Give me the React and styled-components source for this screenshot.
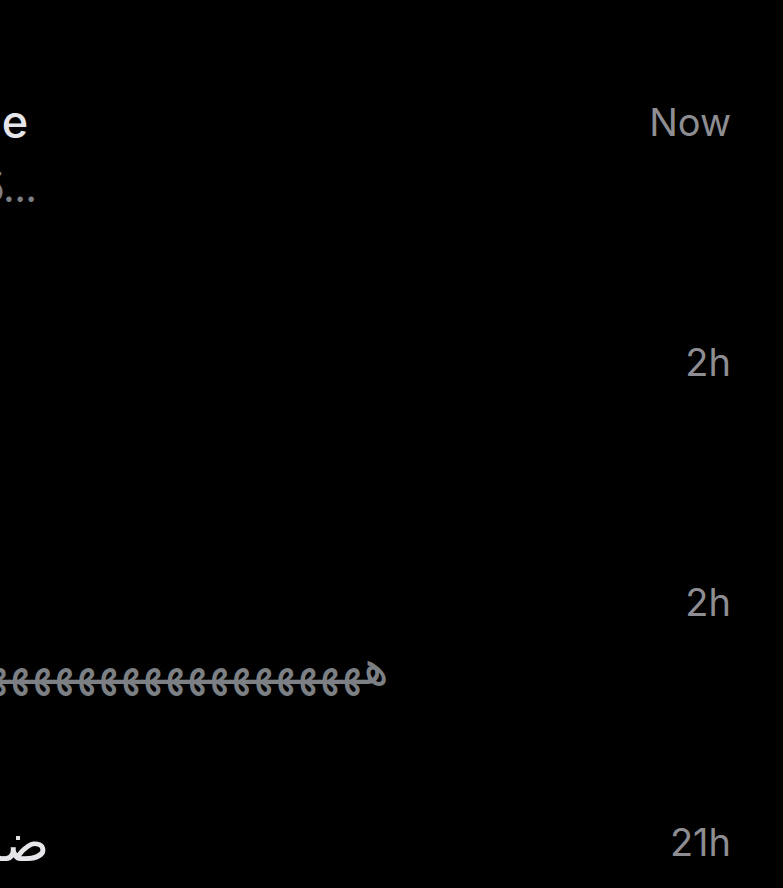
import React from "react";
import styled, { createGlobalStyle } from "styled-components";

const Global = createGlobalStyle`
  html, body { margin: 0; padding: 0; background: #000; }
  body { font-family: Inter, "DejaVu Sans", sans-serif; overflow: hidden; }
`;

const Screen = styled.main`
  width: 783px;
  height: 888px;
  overflow: hidden;
  background: #000;
  padding-top: 68px;
  box-sizing: border-box;
`;

const List = styled.ul`
  list-style: none;
  margin: 0 0 0 -304px;
  padding: 0;
`;

const Row = styled.li`
  display: flex;
  align-items: flex-start;
  gap: 36px;
  height: 240px;
  box-sizing: border-box;
  padding: 24px 52px 0 0;
`;

const TextColumn = styled.div`
  flex: 1;
  min-width: 0;
  display: flex;
  flex-direction: column;
`;

const Title = styled.div`
  font-size: ${(p) => (p.$arabic ? "54px" : "45px")};
  line-height: 60px;
  font-weight: 500;
  color: #e6e6ea;
  white-space: nowrap;
  text-align: left;
`;

const Body = styled.div`
  font-size: ${(p) => (p.$arabic ? "48px" : "41px")};
  line-height: 70px;
  font-weight: 400;
  letter-spacing: ${(p) => (p.$arabic ? "0" : "-0.7px")};
  word-spacing: ${(p) => (p.$arabic ? "0" : "0.2px")};
  color: #7c8084;
  white-space: nowrap;
  text-align: left;
`;

const Time = styled.time`
  font-size: 38px;
  line-height: 60px;
  color: #8d8d92;
  white-space: nowrap;
`;

const arabic = /[\u0600-\u06FF]/;

const items = [
  { title: "Security Notice", body: "Your code is 125...", time: "Now" },
  { title: "Reminder", body: "Meeting", time: "2h" },
  { title: "Ahmed", body: "ه".repeat(31), time: "2h" },
  { title: "ضاحية الياسمين", body: "", time: "21h" },
];

export default function App() {
  return (
    <>
      <Global />
      <Screen>
        <List>
          {items.map((it, i) => (
            <Row key={i}>
              <TextColumn>
                <Title dir="auto" $arabic={arabic.test(it.title)}>
                  {it.title}
                </Title>
                {it.body && (
                  <Body dir="auto" $arabic={arabic.test(it.body)}>
                    {it.body}
                  </Body>
                )}
              </TextColumn>
              <Time>{it.time}</Time>
            </Row>
          ))}
        </List>
      </Screen>
    </>
  );
}
